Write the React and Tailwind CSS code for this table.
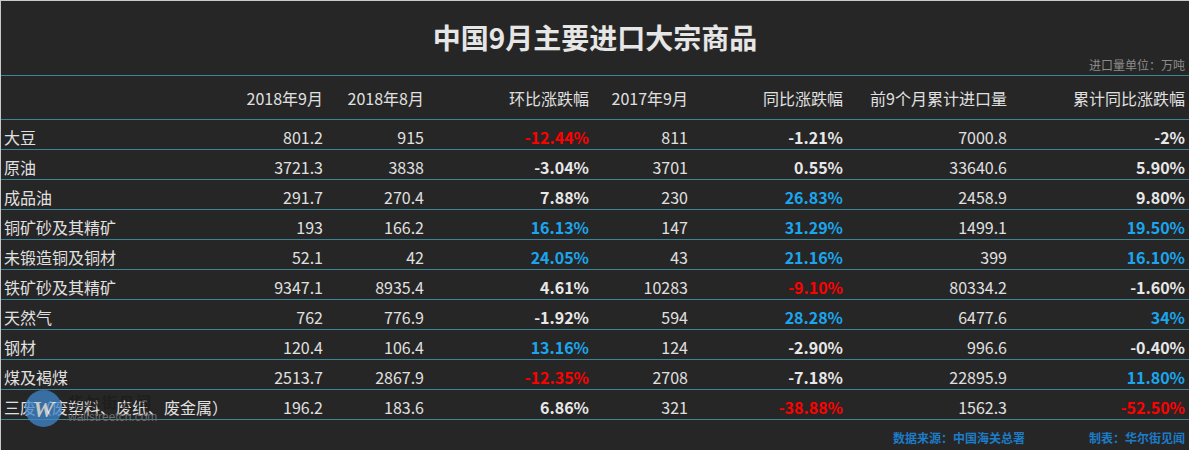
import React from 'react'

const RED = 'text-[#ff0000]'
const BLUE = 'text-[#1aa6ee]'
const WHITE = 'text-[#e8e8e8]'

const rows = [
  ['大豆', '801.2', '915', ['-12.44%', RED], '811', ['-1.21%', WHITE], '7000.8', ['-2%', WHITE]],
  ['原油', '3721.3', '3838', ['-3.04%', WHITE], '3701', ['0.55%', WHITE], '33640.6', ['5.90%', WHITE]],
  ['成品油', '291.7', '270.4', ['7.88%', WHITE], '230', ['26.83%', BLUE], '2458.9', ['9.80%', WHITE]],
  ['铜矿砂及其精矿', '193', '166.2', ['16.13%', BLUE], '147', ['31.29%', BLUE], '1499.1', ['19.50%', BLUE]],
  ['未锻造铜及铜材', '52.1', '42', ['24.05%', BLUE], '43', ['21.16%', BLUE], '399', ['16.10%', BLUE]],
  ['铁矿砂及其精矿', '9347.1', '8935.4', ['4.61%', WHITE], '10283', ['-9.10%', RED], '80334.2', ['-1.60%', WHITE]],
  ['天然气', '762', '776.9', ['-1.92%', WHITE], '594', ['28.28%', BLUE], '6477.6', ['34%', BLUE]],
  ['钢材', '120.4', '106.4', ['13.16%', BLUE], '124', ['-2.90%', WHITE], '996.6', ['-0.40%', WHITE]],
  ['煤及褐煤', '2513.7', '2867.9', ['-12.35%', RED], '2708', ['-7.18%', WHITE], '22895.9', ['11.80%', BLUE]],
  ['三废（废塑料、废纸、废金属）', '196.2', '183.6', ['6.86%', WHITE], '321', ['-38.88%', RED], '1562.3', ['-52.50%', RED]],
]

const headers = ['', '2018年9月', '2018年8月', '环比涨跌幅', '2017年9月', '同比涨跌幅', '前9个月累计进口量', '累计同比涨跌幅']

const grid = 'grid grid-cols-[222px_100px_101px_165px_99px_155px_164px_178px] pr-[4px]'

const Cell = ({ v }) => {
  if (Array.isArray(v)) {
    return <div className={`text-right font-bold ${v[1]}`}>{v[0]}</div>
  }
  return <div className="text-right">{v}</div>
}

export default function App() {
  return (
    <div
      className="relative w-[1189px] h-[450px] overflow-hidden bg-[#262626] border-t border-l border-[#c9c9c9] text-[#e0e0e0]"
      style={{ fontFamily: '"Noto Sans CJK SC", "Noto Sans", sans-serif' }}
    >
      <div className="relative h-[74px]">
        <h1 className="pt-[13px] text-center text-[28px] leading-[46px] font-bold text-[#e6e6e6]">
          中国9月主要进口大宗商品
        </h1>
        <div className="absolute right-[4px] bottom-[2px] text-[12px] leading-[16px] text-[#8c8c8c]">
          进口量单位：万吨
        </div>
      </div>

      <div className={`${grid} h-[45px] items-center border-t border-b border-[#3d8496] text-[16px]`}>
        {headers.map((h, i) => (
          <div key={i} className="text-right">{h}</div>
        ))}
      </div>

      {rows.map((r) => (
        <div key={r[0]} className={`${grid} h-[30px] items-center pt-[4px] border-b border-[#3d8496] text-[16px] leading-[20px]`}>
          <div className="pl-[3px] whitespace-nowrap">{r[0]}</div>
          {r.slice(1).map((v, i) => (
            <Cell key={i} v={v} />
          ))}
        </div>
      ))}

      <div className="flex justify-end gap-[64px] pr-[4px] pt-[9px] text-[12px] leading-[18px] font-bold text-[#1c7cc8]">
        <span>数据来源：中国海关总署</span>
        <span>制表：华尔街见闻</span>
      </div>

      <div className="absolute left-[24px] top-[389px] flex items-center pointer-events-none">
        <div className="w-[37px] h-[37px] rounded-full bg-[#3e86cc] opacity-75 flex items-center justify-center">
          <span className="text-[24px] italic font-bold text-white leading-none" style={{ fontFamily: '"Liberation Serif", serif' }}>W</span>
        </div>
        <div className="ml-[6px] flex flex-col">
          <span className="text-[15px] leading-[17px] font-bold text-[#1b1b1b] opacity-70 tracking-[2px]">华尔街见闻</span>
          <span className="text-[12px] leading-[14px] text-[#6c6c6c]" style={{ fontFamily: '"Liberation Sans", sans-serif' }}>wallstreetcn.com</span>
        </div>
      </div>
    </div>
  )
}
